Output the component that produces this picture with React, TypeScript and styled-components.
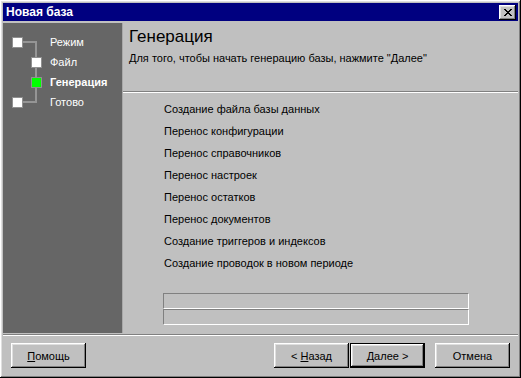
import styled, { createGlobalStyle } from "styled-components";

const GlobalStyle = createGlobalStyle`
  html, body {
    margin: 0;
    padding: 0;
    background: #c0c0c0;
  }
  * {
    box-sizing: border-box;
  }
`;

const raised = `
  box-shadow:
    inset -1px -1px #000000,
    inset 1px 1px #ffffff,
    inset -2px -2px #808080,
    inset 2px 2px #dfdfdf;
`;

const Window = styled.div`
  width: 521px;
  height: 378px;
  padding: 3px;
  background: #c0c0c0;
  display: flex;
  flex-direction: column;
  font-family: "Liberation Sans", Arial, sans-serif;
  font-size: 11px;
  color: #000;
  ${raised}
`;

const TitleBar = styled.div`
  height: 18px;
  flex: none;
  background: #000080;
  color: #fff;
  font-weight: bold;
  font-size: 12px;
  display: flex;
  align-items: center;
  justify-content: space-between;
  padding: 0 2px 0 3px;
`;

const CloseButton = styled.div`
  width: 17px;
  height: 15px;
  background: #c0c0c0;
  display: flex;
  align-items: center;
  justify-content: center;
  ${raised}
`;

const Body = styled.div`
  display: flex;
  height: 310px;
  margin-top: 2px;
  flex: none;
`;

const Sidebar = styled.div`
  position: relative;
  width: 120px;
  flex: none;
  background: #666666;
  border-right: 1px solid #a8a8a8;
  padding-top: 9px;
`;

const Tree = styled.svg`
  position: absolute;
  left: 0;
  top: 0;
`;

const StepRow = styled.div`
  position: relative;
  height: 20px;
  display: flex;
  align-items: center;
  padding-left: 9px;
`;

const IconCell = styled.div`
  width: 38px;
  flex: none;
  display: flex;
`;

const StepBox = styled.div<{ $indent: boolean; $active: boolean }>`
  width: 11px;
  height: 11px;
  margin-left: ${(p) => (p.$indent ? "19px" : "0")};
  background: ${(p) => (p.$active ? "#00ff00" : "#ffffff")};
  border: 1px solid #909090;
`;

const StepLabel = styled.span<{ $active: boolean }>`
  color: #fff;
  font-weight: ${(p) => (p.$active ? "bold" : "normal")};
  font-size: 11px;
`;

const Main = styled.div`
  flex: 1;
  display: flex;
  flex-direction: column;
`;

const Header = styled.div`
  height: 68px;
  flex: none;
  padding: 4px 0 0 6px;
`;

const Heading = styled.div`
  font-size: 17px;
  line-height: 20px;
`;

const Subtitle = styled.div`
  margin-top: 5px;
  font-size: 11px;
  line-height: 13px;
`;

const Rule = styled.div`
  height: 2px;
  flex: none;
  border-top: 1px solid #808080;
  border-bottom: 1px solid #ffffff;
`;

const Steps = styled.ul`
  list-style: none;
  margin: 0;
  padding: 5px 0 0 41px;
`;

const StepItem = styled.li`
  height: 22px;
  line-height: 22px;
`;

const Progress = styled.div`
  margin: 19px 0 0 40px;
  width: 306px;
  display: flex;
  flex-direction: column;
`;

const Bar = styled.div`
  height: 16px;
  border-top: 1px solid #808080;
  border-left: 1px solid #808080;
  border-bottom: 1px solid #ffffff;
  border-right: 1px solid #ffffff;
`;

const Separator = styled.div`
  height: 2px;
  margin-top: 1px;
  flex: none;
  border-top: 1px solid #808080;
  border-bottom: 1px solid #ffffff;
`;

const Footer = styled.div`
  display: flex;
  align-items: center;
  padding: 7px 8px 0 8px;
`;

const Button = styled.div<{ $default?: boolean; $gap?: number }>`
  width: 75px;
  height: 25px;
  margin-left: ${(p) => p.$gap ?? 0}px;
  display: flex;
  align-items: center;
  justify-content: center;
  font-size: 11px;
  ${(p) =>
    p.$default
      ? `
    border: 1px solid #000;
    box-shadow:
      inset -1px -1px #000000,
      inset 1px 1px #ffffff,
      inset -2px -2px #808080,
      inset 2px 2px #dfdfdf;
  `
      : raised}
`;

const Spacer = styled.div`
  flex: 1;
`;

const Key = styled.span`
  text-decoration: underline;
`;

const steps = [
  { label: "Режим", indent: false, active: false },
  { label: "Файл", indent: true, active: false },
  { label: "Генерация", indent: true, active: true },
  { label: "Готово", indent: false, active: false },
];

const tasks = [
  "Создание файла базы данных",
  "Перенос конфигурации",
  "Перенос справочников",
  "Перенос настроек",
  "Перенос остатков",
  "Перенос документов",
  "Создание триггеров и индексов",
  "Создание проводок в новом периоде",
];

const xPixels = [
  [0, 1, 6, 7],
  [1, 2, 5, 6],
  [2, 3, 4, 5],
  [3, 4],
  [2, 3, 4, 5],
  [1, 2, 5, 6],
  [0, 1, 6, 7],
];

function CloseIcon() {
  return (
    <svg width="8" height="7" viewBox="0 0 8 7" shapeRendering="crispEdges">
      {xPixels.map((row, y) =>
        row.map((x) => <rect key={`${x}-${y}`} x={x} y={y} width="1" height="1" fill="#000" />)
      )}
    </svg>
  );
}

export default function App() {
  return (
    <>
      <GlobalStyle />
      <Window>
        <TitleBar>
          <span>Новая база</span>
          <CloseButton>
            <CloseIcon />
          </CloseButton>
        </TitleBar>
        <Body>
          <Sidebar>
            <Tree width="60" height="100" shapeRendering="crispEdges">
              <g stroke="#959595" strokeWidth="2" fill="none">
                <path d="M20 19 H33 V79 H20" />
              </g>
            </Tree>
            {steps.map((s) => (
              <StepRow key={s.label}>
                <IconCell>
                  <StepBox $indent={s.indent} $active={s.active} />
                </IconCell>
                <StepLabel $active={s.active}>{s.label}</StepLabel>
              </StepRow>
            ))}
          </Sidebar>
          <Main>
            <Header>
              <Heading>Генерация</Heading>
              <Subtitle>Для того, чтобы начать генерацию базы, нажмите "Далее"</Subtitle>
            </Header>
            <Rule />
            <Steps>
              {tasks.map((t) => (
                <StepItem key={t}>{t}</StepItem>
              ))}
            </Steps>
            <Progress>
              <Bar />
              <Bar />
            </Progress>
          </Main>
        </Body>
        <Separator />
        <Footer>
          <Button>
            <span>
              <Key>П</Key>омощь
            </span>
          </Button>
          <Spacer />
          <Button>
            <span>
              &lt; <Key>Н</Key>азад
            </span>
          </Button>
          <Button $default $gap={1}>
            <span>
              <Key>Д</Key>алее &gt;
            </span>
          </Button>
          <Button $gap={10}>Отмена</Button>
        </Footer>
      </Window>
    </>
  );
}
